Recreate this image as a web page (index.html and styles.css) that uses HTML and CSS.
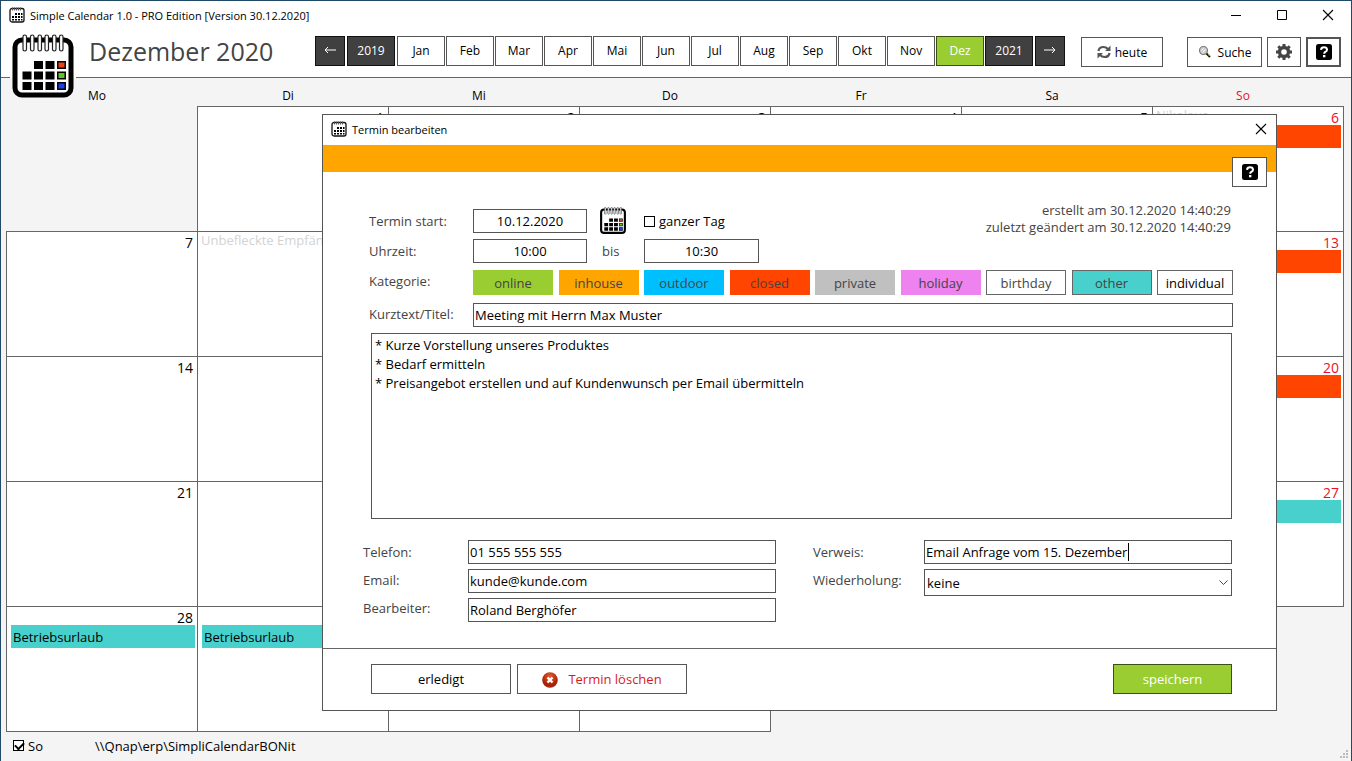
FILE: index.html
```html
<!DOCTYPE html>
<html lang="de">
<head>
<meta charset="utf-8">
<title>Simple Calendar 1.0</title>
<link rel="stylesheet" href="styles.css">
</head>
<body>
<svg class="sprite" aria-hidden="true">
  <symbol id="calendar" viewBox="0 0 64 66">
    <rect x="4" y="6" width="56" height="55" rx="7" fill="#fff" stroke="#000" stroke-width="5"/>
    <g fill="#fff" stroke="#222" stroke-width="1.200">
      <rect x="12" y="1" width="3.500" height="16" rx="1.700"/><rect x="19.500" y="1" width="3.500" height="16" rx="1.700"/><rect x="27" y="1" width="3.500" height="16" rx="1.700"/><rect x="34" y="1" width="3.500" height="16" rx="1.700"/><rect x="41.500" y="1" width="3.500" height="16" rx="1.700"/><rect x="48.500" y="1" width="3.500" height="16" rx="1.700"/>
    </g>
    <path d="M23 27h9v8h-9zM34.500 27h9v8h-9zM46 27h9v8h-9zM11.500 37.500h9v8h-9zM23 37.500h9v8h-9zM34.500 37.500h9v8h-9zM46 37.500h9v8h-9zM11.500 48h9v8h-9zM23 48h9v8h-9zM34.500 48h9v8h-9zM46 48h9v8h-9z"/>
    <path fill="#f04010" d="M47.500 28.500h6v5h-6z"/><path fill="#5fc41c" d="M47.500 39h6v5h-6z"/><path fill="#1c3cf0" d="M47.500 49.500h6v5h-6z"/>
  </symbol>
  <symbol id="calendar-small" viewBox="0 0 16 16">
    <rect x="1" y="1.500" width="14" height="13.500" rx="2" fill="#fff" stroke="#111" stroke-width="1.300"/>
    <path d="M3.500 .5v3M5.500 .5v3M7.500 .5v3M9.500 .5v3M11.500 .5v3" stroke="#555"/>
    <path d="M6 6h2v2h-2zM9 6h2v2h-2zM12 6h1.500v2h-1.500zM3 9h2v2h-2zM6 9h2v2h-2zM9 9h2v2h-2zM12 9h1.500v2h-1.500zM3 12h2v1.500h-2zM6 12h2v1.500h-2zM9 12h2v1.500h-2zM12 12h1.500v1.500h-1.500z"/>
  </symbol>
  <symbol id="help" viewBox="0 0 16 16">
    <rect width="16" height="16" rx="2.500"/>
    <path d="M5 5.800Q5.200 3.300 8 3.300T11 5.700Q11 7 9.300 7.900Q8.200 8.500 8.200 9.700" fill="none" stroke="#fff" stroke-width="2"/><rect x="7" y="11" width="2.400" height="2.300" fill="#fff"/>
  </symbol>
  <symbol id="close" viewBox="0 0 12 12"><path d="M1 1l10 10M11 1L1 11" stroke="#000" stroke-width="1.100"/></symbol>
</svg>
<div class="window">
  <header class="titlebar">
    <svg class="app-icon"><use href="#calendar-small"/></svg>
    <span>Simple Calendar 1.0 - PRO Edition [Version 30.12.2020]</span>
    <div class="window-controls">
      <button aria-label="Minimieren"><svg viewBox="0 0 12 12"><path d="M1 6.500h10" stroke="#000"/></svg></button>
      <button aria-label="Maximieren"><svg viewBox="0 0 12 12"><path d="M1.500 1.500h9v9h-9z" fill="none" stroke="#000"/></svg></button>
      <button aria-label="Schließen"><svg><use href="#close"/></svg></button>
    </div>
  </header>
  <div class="toolbar">
    <svg class="logo"><use href="#calendar"/></svg>
    <h1>Dezember 2020</h1>
    <nav class="months">
      <button class="btn dark arrow back" aria-label="Zurück"><svg viewBox="0 0 12 8"><path d="M12 4H1M4 1L1 4l3 3" fill="none" stroke="#fff"/></svg></button>
      <button class="btn dark year">2019</button>
      <button class="btn">Jan</button><button class="btn">Feb</button><button class="btn">Mar</button><button class="btn">Apr</button><button class="btn">Mai</button><button class="btn">Jun</button><button class="btn">Jul</button><button class="btn">Aug</button><button class="btn">Sep</button><button class="btn">Okt</button><button class="btn">Nov</button><button class="btn green">Dez</button>
      <button class="btn dark year">2021</button>
      <button class="btn dark arrow" aria-label="Weiter"><svg viewBox="0 0 12 8"><path d="M0 4h11M8 1l3 3-3 3" fill="none" stroke="#fff"/></svg></button>
    </nav>
    <button class="btn today"><svg viewBox="0 0 14 14"><path d="M1.500 6Q2 2 6.500 2Q9 2 11 4M12.500 8Q12 12 7.500 12Q5 12 3 10" fill="none" stroke="#555" stroke-width="2.200"/><path d="M13.500 .5v5.500H8zM.5 13.500V8H6z" fill="#555"/></svg>heute</button>
    <div class="tools">
      <button class="btn search"><svg viewBox="0 0 14 14"><circle cx="5.500" cy="5.500" r="4" fill="#ccc" stroke="#777" stroke-width="1.100"/><path d="M3.500 5.500l2-2M4.500 7.500l3-3" stroke="#fff"/><path d="M8.500 8.500L12 12" stroke="#111" stroke-width="2"/><path d="M10 8.500l1.500 2.500" stroke="#8c4"/></svg>Suche</button>
      <button class="btn icon gear" aria-label="Einstellungen"><svg viewBox="0 0 16 16"><circle cx="8" cy="8" r="4.500" fill="none" stroke="#444" stroke-width="3.400"/><path d="M8 0v3M8 13v3M0 8h3M13 8h3M2.300 2.300l2.200 2.200M11.500 11.500l2.200 2.200M13.700 2.300l-2.200 2.200M4.500 11.500l-2.200 2.200" stroke="#444" stroke-width="3"/></svg></button>
      <button class="btn icon active" aria-label="Hilfe"><svg><use href="#help"/></svg></button>
    </div>
  </div>
  <main class="calendar">
    <table>
      <thead><tr><th>Mo</th><th>Di</th><th>Mi</th><th>Do</th><th>Fr</th><th>Sa</th><th class="red">So</th></tr></thead>
      <tbody>
        <tr><td class="blank"></td><td><div class="day">1</div></td><td><div class="day">2</div></td><td><div class="day">3</div></td><td><div class="day">4</div></td><td><div class="day">5</div></td><td><div class="day red"><span>Nikolaus</span>6</div><div class="event closed"></div></td></tr>
        <tr><td><div class="day">7</div></td><td><div class="day"><span>Unbefleckte Empfängnis</span>8</div></td><td><div class="day">9</div></td><td><div class="day">10</div></td><td><div class="day">11</div></td><td><div class="day">12</div></td><td><div class="day red">13</div><div class="event closed"></div></td></tr>
        <tr><td><div class="day">14</div></td><td><div class="day">15</div></td><td><div class="day">16</div></td><td><div class="day">17</div></td><td><div class="day">18</div></td><td><div class="day">19</div></td><td><div class="day red">20</div><div class="event closed"></div></td></tr>
        <tr><td><div class="day">21</div></td><td><div class="day">22</div></td><td><div class="day">23</div></td><td><div class="day">24</div></td><td><div class="day">25</div></td><td><div class="day">26</div></td><td><div class="day red">27</div><div class="event other"></div></td></tr>
        <tr><td><div class="day">28</div><div class="event other">Betriebsurlaub</div></td><td><div class="day">29</div><div class="event other">Betriebsurlaub</div></td><td><div class="day">30</div></td><td><div class="day">31</div></td><td class="blank"></td><td class="blank"></td><td class="blank"></td></tr>
      </tbody>
    </table>
  </main>
  <footer class="statusbar">
    <label class="check"><input type="checkbox" checked>So</label>
    <span>\\Qnap\erp\SimpliCalendarBONit</span>
    <svg class="grip" viewBox="0 0 9 9"><path d="M6 0h2v2h-2zM3 3h2v2h-2zM6 3h2v2h-2zM0 6h2v2h-2zM3 6h2v2h-2zM6 6h2v2h-2z" fill="#bbb"/></svg>
  </footer>

  <section class="dialog" role="dialog" aria-labelledby="dialog-title">
    <header class="titlebar">
      <svg class="app-icon"><use href="#calendar-small"/></svg>
      <span id="dialog-title">Termin bearbeiten</span>
      <div class="window-controls"><button aria-label="Schließen"><svg><use href="#close"/></svg></button></div>
    </header>
    <div class="band"><button class="btn icon" aria-label="Hilfe"><svg><use href="#help"/></svg></button></div>
    <form>
      <div class="top">
        <div class="when">
          <label for="start">Termin start:</label><input id="start" class="centered" value="10.12.2020">
          <svg class="picker"><use href="#calendar"/></svg><label class="check"><input type="checkbox">ganzer Tag</label>
          <label for="from">Uhrzeit:</label><input id="from" class="centered" value="10:00">
          <label for="to" class="until">bis</label><input id="to" class="centered" value="10:30">
        </div>
        <p class="meta">erstellt am 30.12.2020 14:40:29<br>zuletzt geändert am 30.12.2020 14:40:29</p>
      </div>
      <div class="fields">
        <span>Kategorie:</span>
        <div class="categories">
          <button type="button" class="online">online</button><button type="button" class="inhouse">inhouse</button><button type="button" class="outdoor">outdoor</button><button type="button" class="closed">closed</button><button type="button" class="private">private</button><button type="button" class="holiday">holiday</button><button type="button" class="outlined">birthday</button><button type="button" class="outlined other">other</button><button type="button" class="outlined individual">individual</button>
        </div>
        <label for="title">Kurztext/Titel:</label><input id="title" value="Meeting mit Herrn Max Muster">
      </div>
      <textarea aria-label="Beschreibung">* Kurze Vorstellung unseres Produktes
* Bedarf ermitteln
* Preisangebot erstellen und auf Kundenwunsch per Email übermitteln</textarea>
      <div class="details">
        <div class="labels"><label for="phone">Telefon:</label><label for="mail">Email:</label><label for="editor">Bearbeiter:</label></div>
        <div class="inputs"><input id="phone" value="01 555 555 555"><input id="mail" value="kunde@kunde.com"><input id="editor" value="Roland Berghöfer"></div>
        <div class="labels right"><label for="ref">Verweis:</label><label for="repeat">Wiederholung:</label></div>
        <div class="inputs">
          <div class="overlay-host"><input id="ref" value="Email Anfrage vom 15. Dezember"><i class="caret"></i></div>
          <div class="overlay-host"><select id="repeat"><option>keine</option></select><svg class="chevron" viewBox="0 0 9 6"><path d="M.5 .5l4 4 4-4" fill="none" stroke="#444"/></svg></div>
        </div>
      </div>
      <div class="actions">
        <button type="button" class="btn done">erledigt</button>
        <button type="button" class="btn delete"><svg viewBox="0 0 16 16"><defs><radialGradient id="red" cx=".5" cy=".3"><stop offset="0" stop-color="#e86030"/><stop offset="1" stop-color="#a82408"/></radialGradient></defs><circle cx="8" cy="8" r="7.800" fill="url(#red)"/><path d="M5.500 5.500l5 5M10.500 5.500l-5 5" stroke="#fff" stroke-width="2.400"/></svg>Termin löschen</button>
        <button type="button" class="btn green save">speichern</button>
      </div>
    </form>
  </section>
</div>
</body>
</html>
```
FILE: styles.css
```css
* { box-sizing: border-box; }
body { margin: 0; font-family: "Open Sans", "Noto Sans", sans-serif; font-size: 13px; color: #000; }
button, input, select, textarea { font: inherit; color: inherit; border-radius: 0; margin: 0; }
.sprite { display: none; }
.window { position: relative; display: flex; flex-direction: column; min-height: 100vh; border: 1px solid #204a68; background: #f4f4f4; }

.titlebar { display: flex; align-items: center; height: 30px; padding: 0 0 2px 8px; background: #fff; font-size: 11px; }
.app-icon { width: 16px; height: 16px; margin-right: 5px; }
.window-controls { display: flex; margin-left: auto; }
.window-controls button { width: 46px; height: 28px; padding: 0; border: 0; background: none; }
.window-controls svg { width: 12px; height: 12px; display: block; margin: auto; }

.toolbar { position: relative; display: flex; align-items: flex-start; height: 47px; padding: 5px 10px 0 88px; background: #fff; border-bottom: 1px solid #666; }
.logo { position: absolute; left: 9px; top: 3px; width: 66px; height: 66px; background: linear-gradient(#fff 44px, transparent 44px); }
h1 { flex: 0 0 226px; margin: 0; font-size: 25px; line-height: 30px; font-weight: 400; color: #444; }
.months { display: flex; gap: 1px; }
.btn { display: flex; align-items: center; justify-content: center; width: 48px; height: 30px; padding: 0; border: 1px solid #555; background: #fff; }
.toolbar .btn { font-size: 12px; }
.months .btn { padding-bottom: 2px; }
.dark { background: #404040; color: #fff; border-color: #111; }
.green { background: #9acd32; color: #fff; border-color: #3c5014; }
.arrow { width: 30px; }
.arrow svg { width: 12px; height: 8px; }
.back, .months .year { margin-right: 1px; }
.today { width: 82px; margin: 1px 0 0 16px; }
.today svg { width: 14px; height: 14px; margin-right: 4px; }
.tools { display: flex; gap: 5px; margin: 1px 0 0 auto; }
.search { width: 75px; }
.search svg { width: 14px; height: 14px; margin-right: 6px; }
.icon { width: 35px; }
.gear { width: 34px; }
.icon svg { width: 16px; height: 16px; }
.active { border-width: 2px; }

.calendar { flex: 1; padding: 0 7px 0 5px; }
table { width: 100%; table-layout: fixed; border-collapse: collapse; }
th { height: 28px; padding: 8px 10px 0 0; font-size: 12px; line-height: 20px; font-weight: 400; }
td { height: 125px; padding: 0; vertical-align: top; background: #fff; border: 1px solid #666; }
td.blank { background: none; border: 0; }
.day { display: flex; justify-content: flex-end; height: 18px; padding: 0 4px 0 3px; font-size: 14px; line-height: 22px; }
.day span { flex: 1; font-size: 13px; line-height: 17px; color: #d3d3d3; white-space: nowrap; overflow: hidden; }
.red { color: #e81123; }
.event { height: 23px; margin: 0 2px 0 4px; padding-left: 2px; line-height: 24px; }
.closed { background: #ff4500; }
.other { background: #48d1cc; }

.statusbar { display: flex; align-items: center; height: 29px; padding: 0 2px 2px 12px; }
.statusbar .check { width: 82px; }
.grip { width: 9px; height: 9px; margin-left: auto; align-self: flex-end; }
.check { display: flex; align-items: center; }
.check input { appearance: none; width: 11px; height: 11px; margin: 0 4px 0 0; padding: 0; border: 1px solid #000; background: #fff; }
.check input:checked::before { content: ""; display: block; width: 7px; height: 4px; margin: 1px; border: solid #000; border-width: 0 0 2px 2px; transform: rotate(-45deg); }

.dialog { position: absolute; left: 321px; right: 74px; top: 113px; background: #fff; border: 1px solid #555; }
.dialog .window-controls button { width: 30px; }
.band { position: relative; height: 27px; background: #ffa500; }
.band .btn { position: absolute; right: 9px; top: 12px; }
form { display: flex; flex-direction: column; padding-top: 30px; color: #444; }
input, textarea, select { border: 1px solid #555; background: #fff; color: #000; }
input { height: 24px; padding: 0 1px; }
.centered { text-align: center; }
.top { display: flex; align-items: flex-start; padding: 0 45px 0 46px; }
.when { display: grid; grid-template-columns: 104px 114px 57px 115px; gap: 6px 0; grid-auto-rows: 24px; align-items: center; padding-top: 7px; }
.when input.centered { width: 100%; }
.picker { width: 28px; height: 28px; margin-left: 12px; }
.when .check { color: #000; }
.until { margin-left: 15px; }
.meta { margin: 0 0 0 auto; line-height: 17px; text-align: right; }
.fields { display: grid; grid-template-columns: 104px 1fr; gap: 8px 0; padding: 7px 43px 0 46px; line-height: 22px; }
.categories { display: flex; justify-content: space-between; }
.categories button { width: 80px; height: 25px; padding: 0; border: 0; color: #444; }
.online { background: #9acd32; }
.inhouse { background: #ffa500; }
.outdoor { background: #00bfff; }
.categories .closed { background: #ff4500; }
.private { background: #c0c0c0; }
.holiday { background: #ee82ee; }
.categories .outlined { border: 1px solid #666; background: #fff; }
.categories .other { background: #48d1cc; }
.categories .individual { width: 76px; color: #000; }
textarea { height: 186px; margin: 6px 44px 0 48px; padding: 2px 3px; line-height: 19px; resize: none; }
.details { display: grid; grid-template-columns: 105px 308px 148px 1fr; padding: 21px 44px 26px 40px; }
.labels { display: flex; flex-direction: column; line-height: 28px; margin-top: -2px; }
.labels.right { padding-left: 37px; }
.inputs { display: flex; flex-direction: column; gap: 5px; }
.overlay-host { position: relative; display: flex; }
.overlay-host input, .overlay-host select { flex: 1; width: 100%; }
.caret { position: absolute; left: 204px; top: 3px; width: 1px; height: 18px; background: #000; }
select { height: 27px; padding: 0 2px; appearance: none; }
.chevron { position: absolute; right: 4px; top: 11px; width: 9px; height: 6px; }
.actions { display: flex; gap: 6px; padding: 15px 44px 16px 48px; border-top: 1px solid #666; }
.done { width: 140px; color: #000; }
.delete { width: 170px; color: #d81a1a; }
.delete svg { width: 16px; height: 16px; margin: 2px 10px 0 0; }
.save { width: 119px; margin-left: auto; }
```
